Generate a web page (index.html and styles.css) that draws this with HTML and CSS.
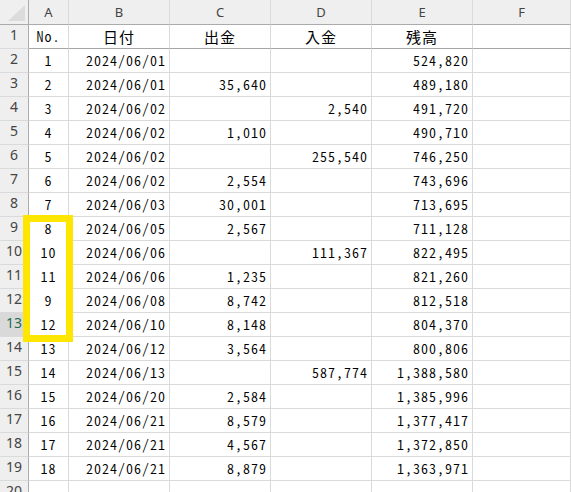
FILE: index.html
```html
<!DOCTYPE html>
<html lang="ja">
<head>
<meta charset="utf-8">
<title>Sheet</title>
<link rel="stylesheet" href="styles.css">
</head>
<body>
<div class="wrap">
  <div class="sheet">
    <div class="corner"><span class="tri"></span></div>
    <div class="ch">A</div><div class="ch">B</div><div class="ch">C</div><div class="ch">D</div><div class="ch">E</div><div class="ch">F</div>

    <div class="rh">1</div><div class="c ctr hdr">No.</div><div class="c ctr hdr jp">日付</div><div class="c ctr hdr jp">出金</div><div class="c ctr hdr jp">入金</div><div class="c ctr hdr jp">残高</div><div class="c hdr"></div>
    <div class="rh">2</div><div class="c ctr">1</div><div class="c r">2024/06/01</div><div class="c r"></div><div class="c r"></div><div class="c r">524,820</div><div class="c"></div>
    <div class="rh">3</div><div class="c ctr">2</div><div class="c r">2024/06/01</div><div class="c r">35,640</div><div class="c r"></div><div class="c r">489,180</div><div class="c"></div>
    <div class="rh">4</div><div class="c ctr">3</div><div class="c r">2024/06/02</div><div class="c r"></div><div class="c r">2,540</div><div class="c r">491,720</div><div class="c"></div>
    <div class="rh">5</div><div class="c ctr">4</div><div class="c r">2024/06/02</div><div class="c r">1,010</div><div class="c r"></div><div class="c r">490,710</div><div class="c"></div>
    <div class="rh">6</div><div class="c ctr">5</div><div class="c r">2024/06/02</div><div class="c r"></div><div class="c r">255,540</div><div class="c r">746,250</div><div class="c"></div>
    <div class="rh">7</div><div class="c ctr">6</div><div class="c r">2024/06/02</div><div class="c r">2,554</div><div class="c r"></div><div class="c r">743,696</div><div class="c"></div>
    <div class="rh">8</div><div class="c ctr">7</div><div class="c r">2024/06/03</div><div class="c r">30,001</div><div class="c r"></div><div class="c r">713,695</div><div class="c"></div>
    <div class="rh">9</div><div class="c ctr nogrid">8</div><div class="c r">2024/06/05</div><div class="c r">2,567</div><div class="c r"></div><div class="c r">711,128</div><div class="c"></div>
    <div class="rh">10</div><div class="c ctr nogrid">10</div><div class="c r">2024/06/06</div><div class="c r"></div><div class="c r">111,367</div><div class="c r">822,495</div><div class="c"></div>
    <div class="rh">11</div><div class="c ctr nogrid">11</div><div class="c r">2024/06/06</div><div class="c r">1,235</div><div class="c r"></div><div class="c r">821,260</div><div class="c"></div>
    <div class="rh">12</div><div class="c ctr nogrid">9</div><div class="c r">2024/06/08</div><div class="c r">8,742</div><div class="c r"></div><div class="c r">812,518</div><div class="c"></div>
    <div class="rh sel">13</div><div class="c ctr">12</div><div class="c r">2024/06/10</div><div class="c r">8,148</div><div class="c r"></div><div class="c r">804,370</div><div class="c"></div>
    <div class="rh">14</div><div class="c ctr">13</div><div class="c r">2024/06/12</div><div class="c r">3,564</div><div class="c r"></div><div class="c r">800,806</div><div class="c"></div>
    <div class="rh">15</div><div class="c ctr">14</div><div class="c r">2024/06/13</div><div class="c r"></div><div class="c r">587,774</div><div class="c r">1,388,580</div><div class="c"></div>
    <div class="rh">16</div><div class="c ctr">15</div><div class="c r">2024/06/20</div><div class="c r">2,584</div><div class="c r"></div><div class="c r">1,385,996</div><div class="c"></div>
    <div class="rh">17</div><div class="c ctr">16</div><div class="c r">2024/06/21</div><div class="c r">8,579</div><div class="c r"></div><div class="c r">1,377,417</div><div class="c"></div>
    <div class="rh">18</div><div class="c ctr">17</div><div class="c r">2024/06/21</div><div class="c r">4,567</div><div class="c r"></div><div class="c r">1,372,850</div><div class="c"></div>
    <div class="rh">19</div><div class="c ctr">18</div><div class="c r">2024/06/21</div><div class="c r">8,879</div><div class="c r"></div><div class="c r">1,363,971</div><div class="c"></div>
    <div class="rh">20</div><div class="c"></div><div class="c"></div><div class="c"></div><div class="c"></div><div class="c"></div><div class="c"></div>
  </div>
  <div class="mark"></div>
</div>
</body>
</html>
```

FILE: styles.css
```css
html, body {
  margin: 0;
  padding: 0;
  background: #ffffff;
  overflow: hidden;
}

.wrap {
  position: relative;
  width: 571px;
  height: 492px;
  overflow: hidden;
}

.sheet {
  display: grid;
  grid-template-columns: 29px 40px 101px 101px 101px 101px 1fr;
  grid-template-rows: 25px repeat(20, 24px);
}

.sheet > div {
  box-sizing: border-box;
}

.corner {
  position: relative;
  background: #efefef;
  border-right: 1px solid #ababab;
  border-bottom: 1px solid #ababab;
}

.tri {
  position: absolute;
  right: 3px;
  bottom: 3px;
  width: 0;
  height: 0;
  border-left: 17px solid transparent;
  border-bottom: 16px solid #dcdcdc;
}

.ch {
  background: #efefef;
  border-right: 1px solid #dadada;
  border-bottom: 1px solid #ababab;
  font-family: "Noto Sans", "Noto Sans CJK JP", sans-serif;
  font-size: 13px;
  line-height: 24px;
  color: #444444;
  text-align: center;
}

.rh {
  background: #efefef;
  border-right: 1px solid #ababab;
  border-bottom: 1px solid #dadada;
  font-family: "Noto Sans", "Noto Sans CJK JP", sans-serif;
  font-size: 14px;
  line-height: 20px;
  color: #444444;
  text-align: center;
}

.rh.sel {
  background: #d9d9d9;
  color: #1e6b52;
}

.c {
  border-right: 1px solid #dadada;
  border-bottom: 1px solid #dadada;
  font-family: "Noto Sans CJK JP", "DejaVu Sans Mono", monospace;
  font-feature-settings: "hwid" 1;
  font-weight: 350;
  font-size: 14px;
  letter-spacing: 1px;
  line-height: 23px;
  color: #000000;
  white-space: nowrap;
  overflow: hidden;
}

.c.jp {
  font-feature-settings: normal;
  font-weight: 400;
  font-size: 15px;
  letter-spacing: 1px;
}

.c.ctr {
  text-align: center;
}

.c.r {
  text-align: right;
  padding-right: 3px;
}

.c.hdr {
  border-bottom-color: #a6a6a6;
}

.c.nogrid {
  border-bottom-color: #ffffff;
}

.mark {
  position: absolute;
  left: 23px;
  top: 215px;
  width: 50px;
  height: 127px;
  box-sizing: border-box;
  border: 7px solid #ffe600;
}
```
